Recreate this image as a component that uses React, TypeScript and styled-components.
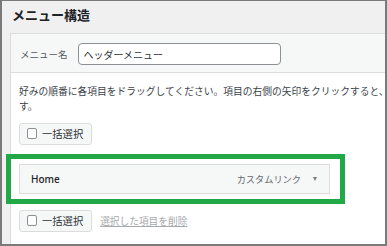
import React from 'react'
import styled, { createGlobalStyle } from 'styled-components'

const GlobalStyle = createGlobalStyle`
  html, body {
    margin : 0;
    padding : 0;
    background : #ffffff;
  }
  * {
    box-sizing : border-box;
  }
`

const Frame = styled.div`
  width : 387px;
  height : 246px;
  overflow : hidden;
  background : #f0f0f0;
  border : 2px solid #7a7a7a;
  border-top-width : 1px;
  font-family : "Noto Sans", "Noto Sans CJK JP", sans-serif;
  color : #3c434a;
`
const Title = styled.h2`
  margin : 0;
  height : 32px;
  padding : 5px 0 0 10px;
  font-size : 13px;
  line-height : 18px;
  font-weight : 700;
  color : #1d2327;
  font-family : "Noto Sans CJK JP", sans-serif;
`
// panel is wider than the visible area, the right side is cut off
const Panel = styled.div`
  margin-left : 8px;
  width : 540px;
  height : 240px;
  background : #ffffff;
  border : 1px solid #dcdcde;
`
const PanelHeader = styled.div`
  display : flex;
  align-items : center;
  padding : 9px 9px 7px;
  background : #f6f7f7;
  border-bottom : 1px solid #dcdcde;
`
const Label = styled.label`
  font-size : 9.5px;
  color : #50575e;
  margin-right : 10px;
  font-family : "Noto Sans CJK JP", sans-serif;
`
const NameInput = styled.input`
  width : 203px;
  height : 22px;
  padding : 0 5px;
  border : 1px solid #8c8f94;
  border-radius : 4px;
  background : #ffffff;
  font-size : 10px;
  color : #2c3338;
  font-family : "Noto Sans CJK JP", sans-serif;
  outline : none;
`
const PanelBody = styled.div`
  padding : 11px 8px 0;
`
const Description = styled.p`
  margin : 0 0 8px;
  width : 521px;
  font-size : 9.75px;
  line-height : 15px;
  color : #3c434a;
  font-family : "Noto Sans CJK JP", sans-serif;
`
const BulkButton = styled.label`
  display : inline-flex;
  align-items : center;
  gap : 5px;
  height : 22px;
  padding : 0 8px 0 7px;
  background : #f6f7f7;
  border : 1px solid #dcdcde;
  border-radius : 3px;
  font-size : 10.3px;
  color : #2c3338;
  font-family : "Noto Sans CJK JP", sans-serif;
`
const CheckBox = styled.span`
  display : inline-block;
  width : 10px;
  height : 11px;
  background : #ffffff;
  border : 1px solid #8c8f94;
  border-radius : 2px;
`
const Highlight = styled.div`
  margin : 9px 0 0 -13px;
  width : 339px;
  border : 5px solid #22a846;
  padding : 5px 10px 5px 8px;
`
const MenuItem = styled.div`
  display : flex;
  align-items : center;
  justify-content : space-between;
  height : 30px;
  padding : 0 12px 0 11px;
  background : #f6f7f7;
  border : 1px solid #dcdcde;
`
const ItemTitle = styled.span`
  font-size : 10px;
  font-weight : 500;
  color : #1d2327;
`
const ItemControls = styled.span`
  display : flex;
  align-items : center;
  gap : 12px;
`
const ItemType = styled.span`
  font-size : 9.2px;
  color : #646970;
  font-family : "Noto Sans CJK JP", sans-serif;
`
const Arrow = styled.span`
  width : 0;
  height : 0;
  border-left : 2.5px solid transparent;
  border-right : 2.5px solid transparent;
  border-top : 4px solid #787c82;
`
const FooterRow = styled.div`
  display : flex;
  align-items : center;
  gap : 8px;
  margin-top : 6px;
`
const DeleteLink = styled.a`
  font-size : 9.7px;
  color : #a7aaad;
  text-decoration : underline;
  font-family : "Noto Sans CJK JP", sans-serif;
`

function BulkSelect() {
  return (
    <BulkButton>
      <CheckBox />
      一括選択
    </BulkButton>
  )
}

function App() {
  return (
    <Frame>
      <GlobalStyle />
      <Title>メニュー構造</Title>
      <Panel>
        <PanelHeader>
          <Label>メニュー名</Label>
          <NameInput defaultValue="ヘッダーメニュー" />
        </PanelHeader>
        <PanelBody>
          <Description>
            好みの順番に各項目をドラッグしてください。項目の右側の矢印をクリックすると、追加の設定オプションを表示します。
          </Description>
          <BulkSelect />
          <Highlight>
            <MenuItem>
              <ItemTitle>Home</ItemTitle>
              <ItemControls>
                <ItemType>カスタムリンク</ItemType>
                <Arrow />
              </ItemControls>
            </MenuItem>
          </Highlight>
          <FooterRow>
            <BulkSelect />
            <DeleteLink>選択した項目を削除</DeleteLink>
          </FooterRow>
        </PanelBody>
      </Panel>
    </Frame>
  )
}

export default App
